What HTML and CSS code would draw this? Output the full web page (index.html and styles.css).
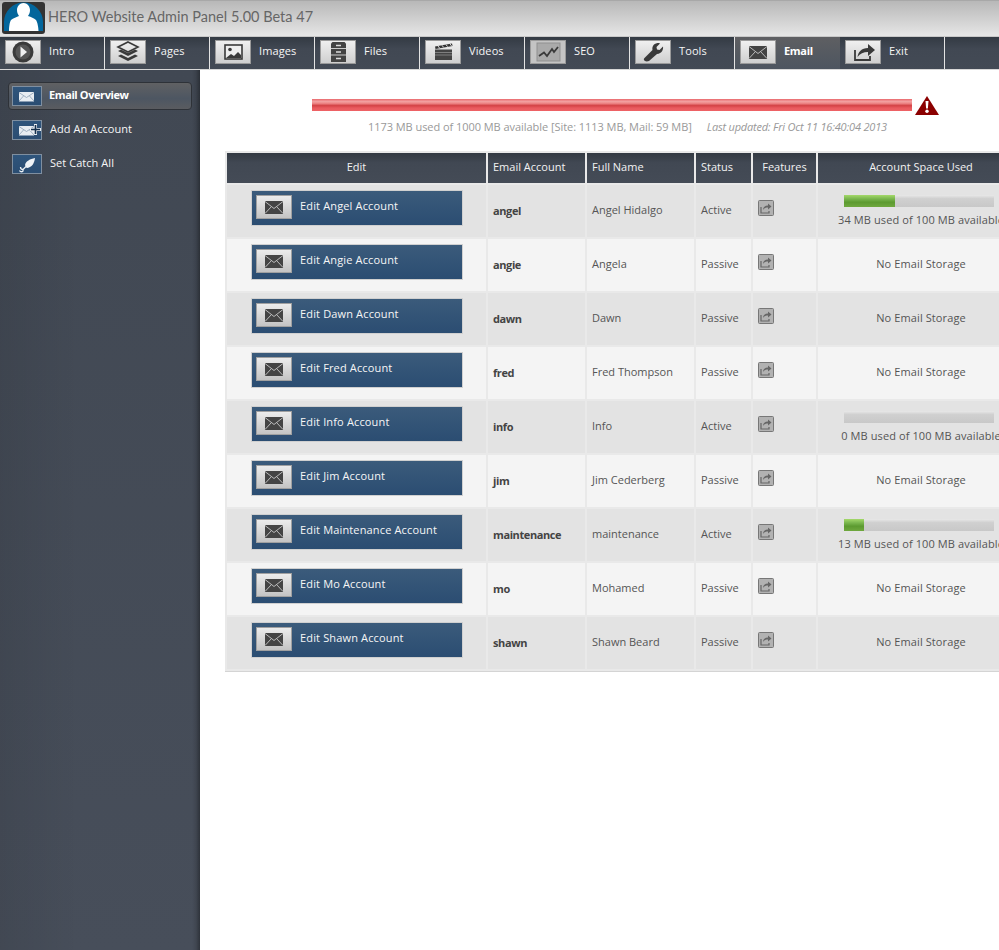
FILE: index.html
```html
<!DOCTYPE html>
<html lang="en">
<head>
<meta charset="utf-8">
<title>HERO Website Admin Panel</title>
<link rel="stylesheet" href="styles.css">
</head>
<body>
<svg class="defs" width="0" height="0" aria-hidden="true">
  <symbol id="i-mail" viewBox="0 0 36 24"><rect x="9" y="6" width="18" height="13" fill="#444"/><path d="M9 6.500 18 13.500 27 6.500M9 18.500 15.500 11.500M27 18.500 20.500 11.500" fill="none" stroke="#bbb" stroke-width="1"/></symbol>
  <symbol id="i-share" viewBox="0 0 16 16"><rect x=".5" y=".5" width="15" height="15" rx="1" fill="#b2b2b2" stroke="#777"/><path d="M3 7v6h8v-2" fill="none" stroke="#666" stroke-width="1.200"/><path d="M5 10c0-3 2-4.500 5-4.500V3.500l3.500 3-3.500 3V7.500C8 7.500 6 8 5 10z" fill="#666"/></symbol>
  <symbol id="i-smail" viewBox="0 0 30 20"><path d="M7 6h15v9.500H7z" fill="#e8edf2"/><path d="M7 6.500 14.500 11.500 22 6.500M7 15 11.500 10M22 15 17.500 10" fill="none" stroke="#8ba0b4" stroke-width=".8"/></symbol>
</svg>

<header class="top">
  <div class="logo">
    <svg viewBox="0 0 43 32" width="43" height="32"><rect width="43" height="32" rx="3" fill="#333"/><path d="M2 29V20a19.500 19.500 0 0 1 39 0v9z" fill="#03669c"/><path d="M7 29c0-3 .5-9 2-11 2-2 6-3 8-4-1-2-2-3-2-6 0-3 2-7 6.500-7S28 5 28 8c0 3-1 4-2 6 3 1 6 2 8 4 1.500 2 2.500 8 2.500 11z" fill="#fff"/></svg>
  </div>
  <h1 class="title">HERO Website Admin Panel 5.00 Beta 47</h1>
</header>

<nav class="nav">
  <a class="nav-item"><span class="nav-icon"><svg viewBox="0 0 36 24" width="36" height="24"><circle cx="18" cy="12" r="10.500" fill="#3a3a3a"/><circle cx="18" cy="12" r="7.500" fill="#555"/><path d="M15.500 6.500 22 12l-6.500 5.500z" fill="#f0f0f0"/></svg></span>Intro</a>
  <a class="nav-item"><span class="nav-icon"><svg viewBox="0 0 36 24" width="36" height="24"><path d="M18 2l10 5-10 5-10-5z" fill="none" stroke="#3a3a3a" stroke-width="1.600"/><path d="M8 11l10 5 10-5-3-1.500-7 3.500-7-3.500z" fill="#3a3a3a"/><path d="M8 16l10 5 10-5-3-1.500-7 3.500-7-3.500z" fill="#3a3a3a"/></svg></span>Pages</a>
  <a class="nav-item"><span class="nav-icon"><svg viewBox="0 0 36 24" width="36" height="24"><rect x="10" y="5" width="17" height="14" fill="#eee" stroke="#3a3a3a" stroke-width="1.600"/><circle cx="15" cy="9.500" r="1.800" fill="#3a3a3a"/><path d="M11 18l5-4 3 2 4-4 3 3v3z" fill="#3a3a3a"/></svg></span>Images</a>
  <a class="nav-item"><span class="nav-icon"><svg viewBox="0 0 36 24" width="36" height="24"><path d="M11 3.500 12.500 2h12L26 3.500V22H11z" fill="#444"/><path d="M11 8.500h15M11 15h15" stroke="#ccc" stroke-width="1"/><path d="M16 5.500h5M16 12h5M16 18.500h5" stroke="#ddd" stroke-width="1.400"/></svg></span>Files</a>
  <a class="nav-item"><span class="nav-icon"><svg viewBox="0 0 36 24" width="36" height="24"><path d="M10 6.500 27 3.500l.5 2.500-17 3z" fill="#333"/><path d="M13 6l1.500 2M17 5.300l1.500 2M21 4.600l1.500 2M25 3.900l1.500 2" stroke="#ddd"/><rect x="10" y="9.500" width="17" height="10.500" fill="#444"/><path d="M10 12.500h17M10 15h17" stroke="#999" stroke-width=".7"/></svg></span>Videos</a>
  <a class="nav-item"><span class="nav-icon nav-icon-seo"><svg viewBox="0 0 36 24" width="36" height="24"><rect x="7" y="3" width="23" height="18" fill="#aaa" stroke="#8f8f8f"/><path d="M9 16l5-3.500 3 3.500 5-7 2 3 4-5" fill="none" stroke="#3a3a3a" stroke-width="1.800"/></svg></span>SEO</a>
  <a class="nav-item"><span class="nav-icon"><svg viewBox="0 0 36 24" width="36" height="24"><path d="M10 21c-1.500-1-1.500-2-.5-3l8-8c-.5-3 .5-6 5-7 1 0 2 0 2.500.5L21.500 7l.5 2.500 2.500.5 3.500-3.500c.5 3-1 7-6 7.500l-8 7c-1.500.5-3 .5-4 0z" fill="#3a3a3a"/></svg></span>Tools</a>
  <a class="nav-item nav-item-active"><span class="nav-icon"><svg width="36" height="24"><use href="#i-mail"/></svg></span>Email</a>
  <a class="nav-item"><span class="nav-icon"><svg viewBox="0 0 36 24" width="36" height="24"><path d="M10 10v10h15v-4" fill="none" stroke="#3a3a3a" stroke-width="1.800"/><path d="M12.500 17c.5-5 4-9 10.500-9V4l7 6-7 6v-4c-4.500 0-8 1.500-10.500 5z" fill="#3a3a3a"/></svg></span>Exit</a>
</nav>

<div class="main">
  <aside class="side">
    <a class="side-item side-item-active"><span class="side-icon"><svg width="30" height="20"><use href="#i-smail"/></svg></span>Email Overview</a>
    <a class="side-item"><span class="side-icon"><svg width="30" height="20"><use href="#i-smail"/></svg><svg class="plus" viewBox="0 0 11 11" width="11" height="11"><path d="M5.500 0v11M0 5.500h11" stroke="#e8edf2" stroke-width="3"/><path d="M5.500 1v9M1 5.500h9" stroke="#16314d" stroke-width="1.600"/></svg></span>Add An Account</a>
    <a class="side-item"><span class="side-icon"><svg viewBox="0 0 30 20" width="30" height="20"><path d="M13 11c1-4 5-6 10-7-.5 4-2 8-6 9.500-1 .5-2 .5-3 0z" fill="#eef2f6"/><path d="M14 12.500 11 15.500v2M11 15.500c-1.500 0-2.500-1-2.500-2.500M11 17.500c-1.500.5-3 0-3.500-1" fill="none" stroke="#eef2f6" stroke-width="1.300"/></svg></span>Set Catch All</a>
  </aside>

  <main class="content">
    <section class="quota">
      <div class="quota-row">
        <div class="quota-bar"></div>
        <svg class="warn" viewBox="0 0 24 19" width="24" height="19"><path d="M12 0 24 19H0z" fill="#8b0000"/><path d="M10.500 5h3l-.6 7.500h-1.800z" fill="#fff"/><circle cx="12" cy="15.200" r="1.700" fill="#fff"/></svg>
      </div>
      <p class="quota-text">1173 MB used of 1000 MB available [Site: 1113 MB, Mail: 59 MB]<em class="updated">Last updated: Fri Oct 11 16:40:04 2013</em></p>
    </section>

    <table class="accounts">
      <thead>
        <tr><th class="c-edit">Edit</th><th class="c-mail left">Email Account</th><th class="c-name left">Full Name</th><th class="c-status left">Status</th><th class="c-feat">Features</th><th class="c-space">Account Space Used</th></tr>
      </thead>
      <tbody>
        <tr class="row-a"><td class="c-edit"><a class="edit-btn"><span class="edit-icon"><svg width="36" height="24"><use href="#i-mail"/></svg></span>Edit Angel Account</a></td><td class="acct">angel</td><td>Angel Hidalgo</td><td>Active</td><td class="feat"><svg width="16" height="16"><use href="#i-share"/></svg></td><td class="space space-bar"><div class="bar"><div class="bar-fill" style="width:34%"></div></div><div class="bar-label">34 MB used of 100 MB available</div></td></tr>
        <tr class="row-b"><td class="c-edit"><a class="edit-btn"><span class="edit-icon"><svg width="36" height="24"><use href="#i-mail"/></svg></span>Edit Angie Account</a></td><td class="acct">angie</td><td>Angela</td><td>Passive</td><td class="feat"><svg width="16" height="16"><use href="#i-share"/></svg></td><td class="space">No Email Storage</td></tr>
        <tr class="row-a"><td class="c-edit"><a class="edit-btn"><span class="edit-icon"><svg width="36" height="24"><use href="#i-mail"/></svg></span>Edit Dawn Account</a></td><td class="acct">dawn</td><td>Dawn</td><td>Passive</td><td class="feat"><svg width="16" height="16"><use href="#i-share"/></svg></td><td class="space">No Email Storage</td></tr>
        <tr class="row-b"><td class="c-edit"><a class="edit-btn"><span class="edit-icon"><svg width="36" height="24"><use href="#i-mail"/></svg></span>Edit Fred Account</a></td><td class="acct">fred</td><td>Fred Thompson</td><td>Passive</td><td class="feat"><svg width="16" height="16"><use href="#i-share"/></svg></td><td class="space">No Email Storage</td></tr>
        <tr class="row-a"><td class="c-edit"><a class="edit-btn"><span class="edit-icon"><svg width="36" height="24"><use href="#i-mail"/></svg></span>Edit Info Account</a></td><td class="acct">info</td><td>Info</td><td>Active</td><td class="feat"><svg width="16" height="16"><use href="#i-share"/></svg></td><td class="space space-bar"><div class="bar"></div><div class="bar-label">0 MB used of 100 MB available</div></td></tr>
        <tr class="row-b"><td class="c-edit"><a class="edit-btn"><span class="edit-icon"><svg width="36" height="24"><use href="#i-mail"/></svg></span>Edit Jim Account</a></td><td class="acct">jim</td><td>Jim Cederberg</td><td>Passive</td><td class="feat"><svg width="16" height="16"><use href="#i-share"/></svg></td><td class="space">No Email Storage</td></tr>
        <tr class="row-a"><td class="c-edit"><a class="edit-btn"><span class="edit-icon"><svg width="36" height="24"><use href="#i-mail"/></svg></span>Edit Maintenance Account</a></td><td class="acct">maintenance</td><td>maintenance</td><td>Active</td><td class="feat"><svg width="16" height="16"><use href="#i-share"/></svg></td><td class="space space-bar"><div class="bar"><div class="bar-fill" style="width:13%"></div></div><div class="bar-label">13 MB used of 100 MB available</div></td></tr>
        <tr class="row-b"><td class="c-edit"><a class="edit-btn"><span class="edit-icon"><svg width="36" height="24"><use href="#i-mail"/></svg></span>Edit Mo Account</a></td><td class="acct">mo</td><td>Mohamed</td><td>Passive</td><td class="feat"><svg width="16" height="16"><use href="#i-share"/></svg></td><td class="space">No Email Storage</td></tr>
        <tr class="row-a"><td class="c-edit"><a class="edit-btn"><span class="edit-icon"><svg width="36" height="24"><use href="#i-mail"/></svg></span>Edit Shawn Account</a></td><td class="acct">shawn</td><td>Shawn Beard</td><td>Passive</td><td class="feat"><svg width="16" height="16"><use href="#i-share"/></svg></td><td class="space">No Email Storage</td></tr>
      </tbody>
    </table>
  </main>
</div>
</body>
</html>
```
FILE: styles.css
```css
* { box-sizing: border-box; }
html, body { height: 100%; overflow: hidden; }
body { margin: 0; background: #fff; font-family: "Open Sans", "Liberation Sans", sans-serif; font-size: 11px; color: #555; }
.defs { position: absolute; }

.top { height: 37px; display: flex; align-items: flex-start; padding: 1px 0 0 2px; gap: 3px; background: linear-gradient(#b8b8b8, #e6e6e6); border-top: 1px solid #a8a8a8; border-bottom: 1px solid #c8c8c8; }
.logo { width: 43px; height: 32px; }
.logo svg { display: block; }
.title { margin: 0; font-family: Lato, "Open Sans", sans-serif; font-size: 14.500px; font-weight: 400; line-height: 30px; color: #666; white-space: nowrap; }

.nav { height: 33px; display: flex; background: linear-gradient(#333a43 0, #414853 12px, #434a55 100%); border-bottom: 1px solid #d8d8d8; }
.nav-item { width: 105px; height: 32px; padding: 3px 0 0 5px; display: flex; gap: 8px; align-items: flex-start; color: #f6f6f6; line-height: 21px; border-right: 1px solid #e4e4e4; letter-spacing: .1px; }
.nav-item-active { background: linear-gradient(#5e5f62, #4d5560); font-weight: 700; color: #fff; border-right: 0; letter-spacing: -.3px; }
.nav-icon { flex: none; width: 36px; height: 24px; background: linear-gradient(#f0f0f0, #cfcfcf); border: 1px solid #9a9a9a; display: block; overflow: hidden; }
.nav-icon svg { display: block; margin: -1px; }
.nav-icon-seo { background: #c4c4c4; }

.main { display: flex; height: calc(100% - 70px); }
.side { width: 200px; flex: none; padding: 12px 8px 0 8px; display: flex; flex-direction: column; gap: 6px; color: #f6f6f6; background: linear-gradient(90deg, rgba(0,0,0,.08) 0, rgba(0,0,0,0) 80px, rgba(0,0,0,0) 192px, rgba(0,0,0,.1) 196px, rgba(0,0,0,.35) 200px), linear-gradient(#414853, #474e5a); }
.side-item { height: 28px; display: flex; align-items: flex-start; gap: 8px; padding: 3px 0 0 3px; line-height: 18px; border: 1px solid transparent; letter-spacing: .05px; }
.side-item-active { gap: 7px; background: linear-gradient(#606163, #4d5662 60%, #5a5c60); border-color: #2e3238; border-radius: 4px; font-weight: 700; color: #fff; letter-spacing: -.4px; }
.side-icon { position: relative; width: 30px; height: 20px; background: linear-gradient(#2f557c, #2b4d72); border: 1px solid #7f8fa0; flex: none; display: block; }
.side-icon svg { display: block; margin: -1px; }
.side-icon .plus { position: absolute; right: 0; top: 3px; margin: 0; }

.content { flex: 1; min-width: 0; padding: 26px 0 0 25px; }
.quota { width: 774px; }
.quota-row { display: flex; align-items: flex-start; padding: 0 0 0 87px; gap: 3px; height: 19px; }
.quota-bar { width: 600px; height: 12px; margin-top: 3px; background: linear-gradient(#e9686c, #f2a0a0 20%, #ef8a8a 35%, #d44346 55%, #e95a5e 75%, #ee6366); }
.warn { display: block; }
.quota-text { margin: 3px 0 0; padding-left: 143px; height: 23px; line-height: 17px; color: #999; white-space: nowrap; letter-spacing: -.05px; }
.updated { margin-left: 15px; font-style: italic; letter-spacing: -.2px; }

.accounts { table-layout: fixed; width: 801px; border-collapse: separate; border-spacing: 2px; background: #e9e9e9; border-bottom: 1px solid #d4d4d4; margin-top: 10px; }
.accounts th { height: 30px; padding: 0 0 3px; color: #f2f2f2; font-weight: 400; text-align: center; background: linear-gradient(#333a43 0, #414853 10px, #444b56); }
.accounts th.left { text-align: left; padding-left: 5px; }
.c-edit { width: 259px; }
.c-mail { width: 97px; }
.c-name { width: 107px; }
.c-status { width: 55px; }
.c-feat { width: 63px; }
.c-space { width: 206px; }
.accounts tbody tr { height: 52px; }
.accounts td { padding: 0 0 4px 5px; vertical-align: middle; color: #555; white-space: nowrap; }
.accounts td.c-edit { padding: 5px 0 0 24px; vertical-align: top; }
.row-a td { background: #e3e3e3; }
.row-b td { background: #f4f4f4; }
.accounts .acct { font-weight: 700; color: #444; padding: 0 0 2px 5px; letter-spacing: -.4px; }
.accounts .feat { padding: 0 0 6px 5px; }
.feat svg { display: block; }
.accounts .space { padding: 0 0 4px; text-align: center; letter-spacing: .1px; }
.accounts .space-bar { padding: 10px 0 0; vertical-align: top; }

.edit-btn { display: flex; width: 212px; height: 36px; padding: 4px 0 0 4px; gap: 8px; line-height: 22px; color: #f6f6f6; background: linear-gradient(#3b5b7b, #2b4d72); border: 1px solid #d0d0d0; letter-spacing: .15px; }
.edit-icon { flex: none; width: 36px; height: 24px; background: linear-gradient(#ececec, #c4c4c4); border: 1px solid #a0a0a0; display: block; }
.edit-icon svg { display: block; margin: -1px; }

.bar { width: 150px; height: 12px; margin: 0 0 6px 26px; background: linear-gradient(#e8e8e8, #d0d0d0 30%, #c8c8c8); }
.bar-fill { height: 100%; background: linear-gradient(#a5d96a, #7cb850 30%, #5c9a30 60%, #6fa83e); }
.bar-label { line-height: 14px; }
```
